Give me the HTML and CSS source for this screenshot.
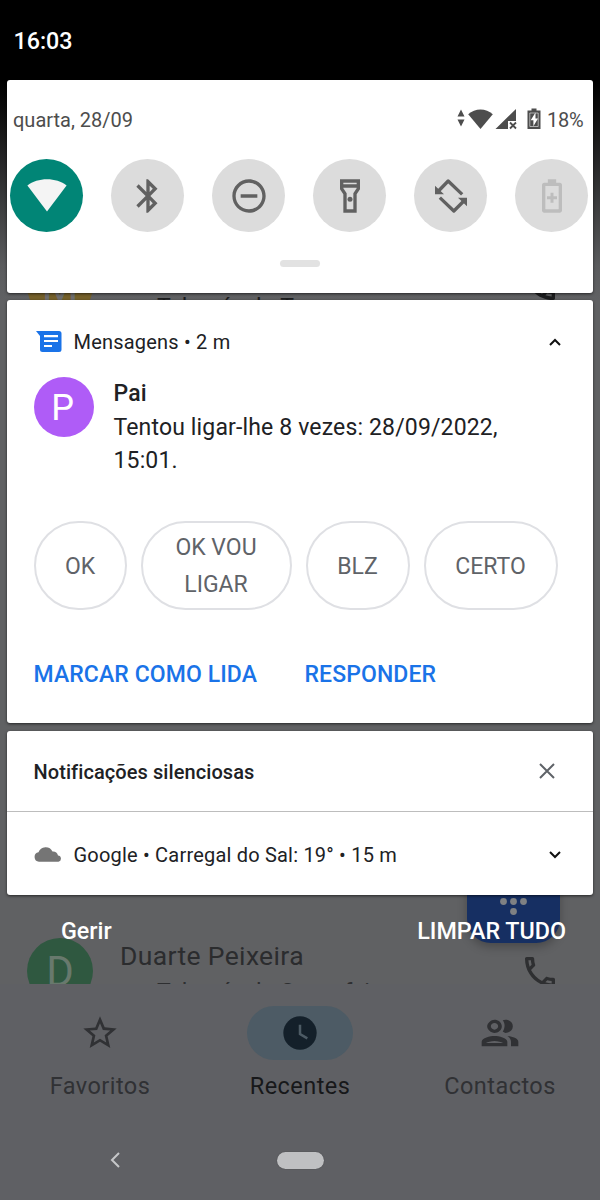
FILE: index.html
```html
<!DOCTYPE html>
<html lang="pt">
  <head>
    <meta charset="UTF-8" />
    <meta name="viewport" content="width=device-width, initial-scale=1.0" />
    <title>Notificações</title>
    <link rel="stylesheet" href="styles.css">
  </head>
  <body>
    <div class="phone">
      <!-- dialer, dimmed behind the shade -->
      <div class="dialer">
        <div class="calls">
          <div class="call">
            <div class="call-avatar yellow">M</div>
            <div class="call-info">
              <div class="call-name"></div>
              <div class="call-sub dark"><span class="arrow">↙</span>Telemóvel • T</div>
            </div>
            <svg class="call-icon dark" viewBox="3 3 18 18"><path d="M6.54 5c.06.89.21 1.76.45 2.59l-1.2 1.2c-.41-1.2-.67-2.47-.76-3.79h1.51m9.86 12.02c.85.24 1.72.39 2.6.45v1.49c-1.32-.09-2.59-.35-3.8-.75l1.2-1.19M7.5 3H4c-.55 0-1 .45-1 1 0 9.39 7.61 17 17 17 .55 0 1-.45 1-1v-3.49c0-.55-.45-1-1-1-1.24 0-2.45-.2-3.57-.57a.84.84 0 0 0-.31-.05c-.26 0-.51.1-.71.29l-2.2 2.2a15.15 15.15 0 0 1-6.59-6.59l2.2-2.2c.28-.28.36-.67.25-1.02A11.36 11.36 0 0 1 8.5 4c0-.55-.45-1-1-1z"/></svg>
          </div>
          <div class="call">
            <div class="call-avatar green">D</div>
            <div class="call-info">
              <div class="call-name">Duarte Peixeira</div>
              <div class="call-sub"><span class="arrow">↙</span>Telemóvel • Sexta-feira</div>
            </div>
            <svg class="call-icon" viewBox="3 3 18 18"><path d="M6.54 5c.06.89.21 1.76.45 2.59l-1.2 1.2c-.41-1.2-.67-2.47-.76-3.79h1.51m9.86 12.02c.85.24 1.72.39 2.6.45v1.49c-1.32-.09-2.59-.35-3.8-.75l1.2-1.19M7.5 3H4c-.55 0-1 .45-1 1 0 9.39 7.61 17 17 17 .55 0 1-.45 1-1v-3.49c0-.55-.45-1-1-1-1.24 0-2.45-.2-3.57-.57a.84.84 0 0 0-.31-.05c-.26 0-.51.1-.71.29l-2.2 2.2a15.15 15.15 0 0 1-6.59-6.59l2.2-2.2c.28-.28.36-.67.25-1.02A11.36 11.36 0 0 1 8.5 4c0-.55-.45-1-1-1z"/></svg>
          </div>
          <div class="fab">
            <svg viewBox="0 0 28 58" width="28" height="58"><g fill="#7f8183"><circle cx="3.500" cy="43.500" r="3.400"/><circle cx="13.500" cy="43.500" r="3.400"/><circle cx="23.500" cy="43.500" r="3.400"/><circle cx="13.500" cy="53.500" r="3.400"/></g></svg>
          </div>
        </div>

        <div class="tabs">
          <div class="tab">
            <div class="tab-icon">
              <svg viewBox="0 0 24 24" width="40" height="40"><path d="M22 9.24l-7.19-.62L12 2 9.19 8.63 2 9.24l5.46 4.73L5.82 21 12 17.27 18.18 21l-1.63-7.03L22 9.24zM12 15.4l-3.76 2.27 1-4.28-3.32-2.88 4.38-.38L12 6.1l1.71 4.04 4.38.38-3.32 2.88 1 4.28L12 15.4z"/></svg>
            </div>
            Favoritos
          </div>
          <div class="tab active">
            <div class="tab-icon">
              <svg viewBox="0 0 24 24" width="40" height="40"><circle cx="12" cy="12" r="10"/><path d="M12 7v5.6l4.4 2.6" fill="none" stroke="#4d5b65" stroke-width="1.5"/></svg>
            </div>
            Recentes
          </div>
          <div class="tab">
            <div class="tab-icon">
              <svg viewBox="0 0 24 24" width="44" height="40" preserveAspectRatio="none"><path d="M9 13.75c-2.34 0-7 1.17-7 3.5V20h14v-2.75c0-2.33-4.66-3.5-7-3.5zM4.340 18c.84-.58 2.87-1.25 4.66-1.25s3.82.67 4.660 1.250H4.340zM9 12c1.930 0 4-1.570 4-4s-2.070-4-4-4-4 2.070-4 4 2.070 4 4 4zm0-6c1.100 0 2 .9 2 2s-.9 2-2 2-2-.9-2-2 .9-2 2-2zm7.040 7.810c1.160.84 1.960 1.960 1.960 3.440V20h4v-2.750c0-2.020-3.500-3.170-5.960-3.440zM15 12c1.930 0 4-1.570 4-4s-2.070-4-4-4c-.54 0-1.040.13-1.500.35.63.89 1 1.980 1 3.150s-.37 2.760-1 3.650c.46.220.96.850 1.500.850z"/></svg>
            </div>
            Contactos
          </div>
        </div>

        <div class="sysnav">
          <svg class="back" viewBox="0 0 10 16" width="10" height="16"><path d="M9 1L2 8l7 7" fill="none" stroke="#c6c7c9" stroke-width="2"/></svg>
          <div class="pill"></div>
        </div>
      </div>

      <div class="shade">
        <div class="clock">16:03</div>

        <div class="card quick">
          <div class="status">
            <span class="date">quarta, 28/09</span>
            <svg class="status-icons" viewBox="0 0 86 24" width="86" height="24">
              <g fill="#4d4d4d">
                <path d="M0.500 10.500L4 3.500l3.500 7zM0.500 13.500L4 20.500l3.500-7z"/>
                <path d="M11.200 8.200C18 1.800 29 1.800 35.800 8.200L23.500 23z"/>
                <path d="M59 3v12h-8v8H38.500z"/>
                <path d="M53 16.500l6 6M59 16.500l-6 6" stroke="#4d4d4d" stroke-width="1.800"/>
                <path d="M74.500 2.500h5v2h4v18.500H70.500V4.500h4z"/>
              </g>
              <path d="M78.500 6.500l-4.800 7.800h2.700v6l4.600-7.800h-2.500z" fill="#fff"/>
              <path d="M72.800 7v13.500h8.400V7z" fill="none" stroke="#fff" stroke-width=".8" opacity=".7"/>
            </svg>
            <span class="percent">18%</span>
          </div>
          <div class="tiles">
            <div class="tile on">
              <svg viewBox="0 0 40 40" width="40" height="40"><path d="M0.400 9.500C10.500 1.200 29.500 1.200 39.600 9.500L20 35.500z" fill="#f4f4f4"/></svg>
            </div>
            <div class="tile">
              <svg viewBox="0 0 24 24" width="40" height="40"><path d="M17.710 7.710L12 2h-1v7.590L6.410 5 5 6.410 10.590 12 5 17.590 6.410 19 11 14.410V22h1l5.710-5.710-4.300-4.290 4.300-4.290zM13 5.830l1.880 1.880L13 9.590V5.830zm1.880 10.460L13 18.170v-3.760l1.880 1.880z"/></svg>
            </div>
            <div class="tile">
              <svg viewBox="0 0 24 24" width="40" height="40"><path d="M12 2C6.480 2 2 6.480 2 12s4.480 10 10 10 10-4.480 10-10S17.520 2 12 2zm0 18c-4.410 0-8-3.590-8-8s3.590-8 8-8 8 3.590 8 8-3.590 8-8 8zM7 11h10v2H7z"/></svg>
            </div>
            <div class="tile">
              <svg viewBox="0 0 24 24" width="40" height="40"><path d="M6 2v6l2 3v11h8V11l2-3V2H6zm10 2v1H8V4h8zm-2 6.400V20h-4v-9.600L8 7.390V7h8v.390l-2 3.010z"/><circle cx="12" cy="14" r="1.500"/></svg>
            </div>
            <div class="tile">
              <svg viewBox="0 0 24 24" width="40" height="40"><path d="M4.500 9L10.300 3 18.700 11M5.300 13L13.700 21l6-6" fill="none" stroke="#616161" stroke-width="2" stroke-linejoin="round"/><path d="M2.400 5.800v5.200h5.400zM21.600 18.200v-5.200h-5.400z"/></svg>
            </div>
            <div class="tile off">
              <svg viewBox="0 0 24 24" width="40" height="40"><path d="M16.670 4H14.500V2h-5v2H7.330C6.600 4 6 4.600 6 5.330v15.330C6 21.400 6.600 22 7.330 22h9.330c.740 0 1.340-.600 1.340-1.330V5.330C18 4.600 17.400 4 16.670 4zM16 20H8V6h8v14zM11.100 16h1.800v-2.100H15v-1.800h-2.100V10h-1.800v2.100H9v1.800h2.100z"/></svg>
            </div>
          </div>
          <div class="handle"></div>
        </div>

        <div class="card message">
          <div class="note-head">
            <svg class="app-icon" viewBox="0 0 28 22" width="28" height="22"><path d="M0 0h23a2.500 2.500 0 0 1 2.500 2.500v16A2.500 2.500 0 0 1 23 21H6.500A2.500 2.500 0 0 1 4 18.500V5z" fill="#1a73e8"/><path d="M8 5.200h14M8 10h14M8 15h8" stroke="#fff" stroke-width="2.200"/></svg>
            <span class="note-title">Mensagens • 2 m</span>
            <svg class="chevron" viewBox="0 0 12 8" width="12" height="8"><path d="M1 7l5-5 5 5" fill="none" stroke="#111" stroke-width="2"/></svg>
          </div>
          <div class="message-body">
            <div class="avatar">P</div>
            <div class="message-text">
              <b>Pai</b>
              <p>Tentou ligar-lhe 8 vezes: 28/09/2022, 15:01.</p>
            </div>
          </div>
          <div class="replies">
            <div class="reply ok">OK</div>
            <div class="reply call-you">OK VOU LIGAR</div>
            <div class="reply blz">BLZ</div>
            <div class="reply certo">CERTO</div>
          </div>
          <div class="actions">
            <span class="mark">MARCAR COMO LIDA</span>
            <span>RESPONDER</span>
          </div>
        </div>

        <div class="card silent">
          <div class="silent-head">
            <span>Notificações silenciosas</span>
            <svg viewBox="0 0 16 16" width="16" height="16"><path d="M1 1l14 14M15 1L1 15" stroke="#5f6368" stroke-width="2"/></svg>
          </div>
          <div class="silent-row">
            <svg class="cloud" viewBox="0 0 28 16" width="28" height="16"><path d="M5 14.800A4.800 4.800 0 0 1 4.500 5.300 7.600 7.600 0 0 1 18.500 4.500 5.300 5.300 0 0 1 24 8.500 3.200 3.200 0 0 1 24.500 14.800z" fill="#757575"/></svg>
            <span class="note-title">Google • Carregal do Sal: 19° • 15 m</span>
            <svg class="chevron" viewBox="0 0 12 8" width="12" height="8"><path d="M1 1l5 5 5-5" fill="none" stroke="#111" stroke-width="2"/></svg>
          </div>
        </div>

        <div class="footer">
          <span class="manage">Gerir</span>
          <span class="clear">LIMPAR TUDO</span>
        </div>
      </div>
    </div>
  </body>
</html>
```

FILE: styles.css
```css
* {
  box-sizing: border-box;
}

body {
  margin: 0;
  font-family: Roboto, sans-serif;
  background: #000;
}

svg {
  display: block;
  flex-shrink: 0;
}

.phone {
  position: relative;
  width: 600px;
  height: 1200px;
  overflow: hidden;
  background: linear-gradient(#000 80px, #0c0c0c 110px, #5a5b5d 265px, #606163 300px);
}

/* dialer */
.dialer {
  display: flex;
  flex-direction: column;
  height: 1200px;
}

.calls {
  position: relative;
  height: 984px;
  padding: 253px 45px 0 27px;
  overflow: hidden;
  display: flex;
  flex-direction: column;
  gap: 619px;
}

.call {
  display: flex;
  height: 66px;
  flex-shrink: 0;
}

.call-avatar {
  width: 66px;
  height: 66px;
  border-radius: 50%;
  font-size: 42px;
  line-height: 68px;
  text-align: center;
  color: #68796d;
}

.yellow {
  background: #75602a;
  color: #6e6e6e;
}

.green {
  background: #2f5840;
}

.call-info {
  flex: 1;
  padding: 2px 0 0 27px;
}

.call-name {
  height: 32px;
  font-size: 26.5px;
  line-height: 32px;
  color: #2b2c2e;
  letter-spacing: 0.35px;
}

.call-sub {
  display: flex;
  margin-top: 7px;
  font-size: 23px;
  line-height: 28px;
  color: #2e2f31;
  white-space: nowrap;
}

.arrow {
  width: 37px;
  padding-left: 11px;
  font-size: 18px;
}

.call-icon {
  width: 30px;
  height: 30px;
  margin-top: 19px;
  fill: #2e2f31;
}

.dark {
  color: #1c1d1e;
  fill: #1c1d1e;
}

.call-icon.dark {
  margin-top: 17px;
}

.fab {
  position: absolute;
  left: 467px;
  top: 858px;
  width: 93px;
  height: 85px;
  border-radius: 24px;
  background: #162f62;
  display: flex;
  justify-content: center;
  box-shadow: 0 4px 10px rgba(0, 0, 0, 0.25);
}

.tabs {
  display: flex;
  height: 136px;
  padding-top: 22px;
  background: #5f6064;
}

.tab {
  width: 200px;
  font-size: 23.5px;
  line-height: 30px;
  text-align: center;
  letter-spacing: 0.45px;
  color: #303134;
}

.tab-icon {
  display: flex;
  justify-content: center;
  align-items: center;
  width: 106px;
  height: 54px;
  margin: 0 auto 11px;
  border-radius: 27px;
}

.tab svg {
  fill: #303134;
}

.active {
  color: #17181a;
}

.active .tab-icon {
  background: #4d5b65;
}

.tab.active svg {
  fill: #14202a;
}

.sysnav {
  display: flex;
  align-items: center;
  height: 80px;
  padding-left: 110px;
  background: #5f6064;
}

.pill {
  width: 47px;
  height: 17px;
  margin-left: 157px;
  border-radius: 9px;
  background: #bfc0c2;
  box-shadow: 0 0 1px rgba(0, 0, 0, 0.5);
}

/* notification shade lies over the dialer */
.shade {
  position: absolute;
  top: 0;
  left: 0;
  width: 600px;
  padding: 0 7px;
}

.clock {
  height: 80px;
  padding: 25px 0 0 6.5px;
  font-size: 23.3px;
  line-height: 32px;
  font-weight: 500;
  color: #fff;
}

.card {
  background: #fff;
  border-radius: 3px;
  box-shadow: 0 1px 3px rgba(0, 0, 0, 0.6);
}

.quick {
  height: 213px;
  padding: 25px 4px 0;
}

.status {
  display: flex;
  align-items: center;
  height: 29px;
  padding: 0 5px 0 2px;
  font-size: 20px;
  color: #4d4d4d;
}

.date {
  flex: 1;
}

.status-icons {
  margin-bottom: 3px;
}

.percent {
  width: 37px;
  margin-left: 4px;
  letter-spacing: -0.2px;
}

.tiles {
  display: flex;
  gap: 27.8px;
  margin: 25px 0 0 -1px;
}

.tile {
  display: flex;
  justify-content: center;
  align-items: center;
  flex-shrink: 0;
  width: 73.2px;
  height: 73.2px;
  border-radius: 50%;
  background: #dcdcdc;
  fill: #616161;
}

.on {
  background: #018576;
}

.off {
  fill: #bdbdbd;
}

.handle {
  width: 40px;
  height: 7px;
  margin: 28px auto 0;
  border-radius: 4px;
  background: #e2e2e2;
}

.message {
  height: 423px;
  margin-top: 7px;
  padding: 28px 27px 0 26.5px;
}

.note-head {
  display: flex;
  align-items: center;
  height: 28px;
}

.app-icon {
  margin-left: 2px;
}

.note-title {
  flex: 1;
  margin-left: 10px;
  font-size: 20px;
  line-height: 28px;
  letter-spacing: 0.2px;
  color: #202124;
}

.chevron {
  margin-right: 5px;
}

.message-body {
  display: flex;
  margin-top: 20px;
}

.avatar {
  width: 60px;
  height: 60px;
  margin-top: 1px;
  border-radius: 50%;
  background: #af5cf7;
  color: #fff;
  font-size: 36px;
  line-height: 62px;
  text-align: center;
  text-indent: -2px;
}

.message-text {
  width: 420px;
  margin-left: 20px;
  padding-top: 1px;
  font-size: 23px;
  line-height: 33.5px;
  letter-spacing: 0.15px;
  color: #202124;
}

.message-text b {
  font-weight: 500;
}

.message-text p {
  margin: 0;
}

.replies {
  display: flex;
  gap: 14px;
  margin-top: 43px;
}

.reply {
  display: flex;
  justify-content: center;
  align-items: center;
  height: 89px;
  padding: 2px 30px 0;
  border: 2px solid #dfe0e4;
  border-radius: 45px;
  font-size: 23px;
  line-height: 37px;
  text-align: center;
  color: #5f6368;
}

.ok {
  width: 93px;
}

.call-you {
  width: 151px;
}

.blz {
  width: 104px;
}

.certo {
  width: 134px;
}

.actions {
  display: flex;
  margin-top: 49px;
  font-size: 23px;
  line-height: 32px;
  font-weight: 500;
  letter-spacing: 0.1px;
  color: #1a73e8;
}

.mark {
  width: 271px;
}

.silent {
  height: 164px;
  margin-top: 8px;
}

.silent-head {
  display: flex;
  align-items: center;
  justify-content: space-between;
  height: 81px;
  padding: 0 38px 0 26.5px;
  border-bottom: 1px solid #bdbdbd;
  font-size: 20px;
  font-weight: 500;
  letter-spacing: 0.08px;
  color: #202124;
}

.silent-head span {
  padding-top: 2px;
}

.silent-row {
  display: flex;
  align-items: center;
  height: 85px;
  padding: 0 27px 0 26.5px;
}

.cloud {
  margin-right: 2px;
}

.footer {
  display: flex;
  justify-content: space-between;
  padding: 21px 27px 0 54px;
  font-size: 23.3px;
  line-height: 30px;
  font-weight: 500;
  color: #fff;
}
```
